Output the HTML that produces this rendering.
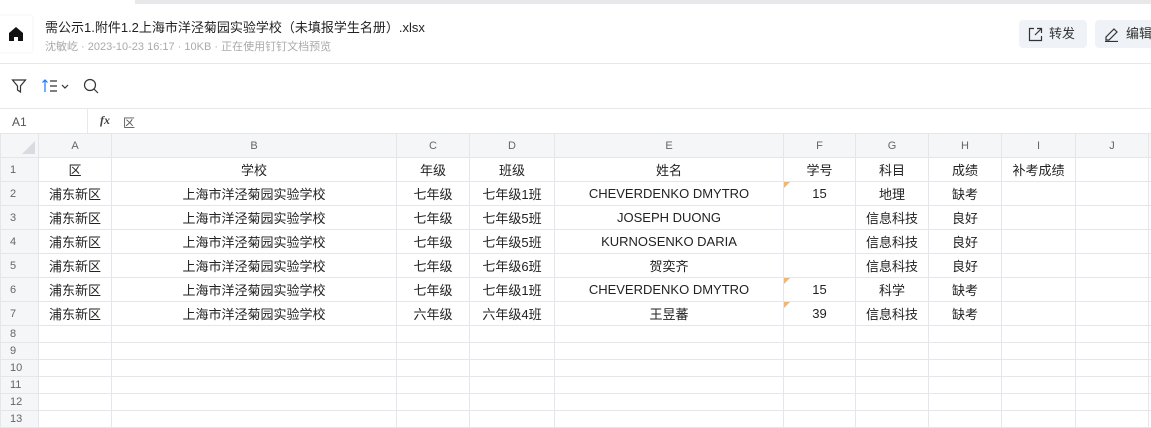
<!DOCTYPE html><html><head><meta charset="utf-8"><style>
*{margin:0;padding:0;box-sizing:border-box}
body{width:1151px;height:427px;overflow:hidden;background:#fff;font-family:"Liberation Sans","Noto Sans CJK SC",sans-serif;color:#222;position:relative}
.abs{position:absolute}
table{border-collapse:collapse;table-layout:fixed;position:absolute;left:0;top:133px;width:1168px}
td{border:1px solid #e3e6ea;font-size:13px;text-align:center;white-space:nowrap;overflow:hidden;padding:0;position:relative;color:#222}
tr.h td{background:#f5f6f8;color:#666;font-size:11px;height:24px}
td.rn{background:#f5f6f8;color:#666;font-size:11px;text-align:left;padding-left:9px}
tr.r td{height:24px}
tr.s td{height:17px}
.tri{position:absolute;left:0;top:0;width:0;height:0;border-top:6px solid #f5b56a;border-right:6px solid transparent}
</style></head><body>
<div class="abs" style="left:135px;top:0;width:1016px;height:4px;background:#e8e8ea"></div>
<div class="abs" style="left:0;top:16px;width:32px;height:36px;background:#fff;box-shadow:0 0 3px #eee"></div>
<svg class="abs" style="left:8px;top:26px" width="16" height="16" viewBox="0 0 16 16"><path d="M8 1 L15 7 V15 H10 V11 H6 V15 H1 V7 Z" fill="#111"/></svg>
<div class="abs" style="left:45px;top:17px;font-size:13px;color:#222">需公示1.附件1.2上海市洋泾菊园实验学校（未填报学生名册）.xlsx</div>
<div class="abs" style="left:45px;top:38px;font-size:11px;color:#aaa">沈敏屹 · 2023-10-23 16:17 · 10KB · 正在使用钉钉文档预览</div>
<div class="abs" style="left:1019px;top:20px;width:68px;height:28px;background:#eff2f6;border-radius:4px;font-size:13px;line-height:28px;padding-left:30px;color:#333">转发</div>
<svg class="abs" style="left:1028px;top:27px" width="15" height="15" viewBox="0 0 15 15" fill="none" stroke="#333" stroke-width="1.2"><path d="M6 1.5H1.5V13.5H13.5V9M9 1.5H13.5V6M13.5 1.5L7 8"/></svg>
<div class="abs" style="left:1095px;top:20px;width:70px;height:28px;background:#eff2f6;border-radius:4px;font-size:13px;line-height:28px;padding-left:31px;color:#333">编辑</div>
<svg class="abs" style="left:1104px;top:27px" width="15" height="15" viewBox="0 0 15 15" fill="none" stroke="#333" stroke-width="1.2"><path d="M10 2L13 5L5 13H2V10Z M1 14.5H14"/></svg>
<div class="abs" style="left:0;top:63px;width:1151px;height:1px;background:#e8e8ea"></div>
<svg class="abs" style="left:11px;top:78px" width="16" height="16" viewBox="0 0 16 16" fill="none" stroke="#333" stroke-width="1.2"><path d="M1.5 2H14.5L9.5 8V14L6.5 12V8Z"/></svg>
<svg class="abs" style="left:41px;top:78px" width="30" height="16" viewBox="0 0 30 16" fill="none" stroke-width="1.2"><path d="M4 14V2M1.5 4.5L4 2L6.5 4.5" stroke="#1677ff"/><path d="M9 3H16M9 8H16M9 13H16" stroke="#333"/><path d="M21 7L24 10L27 7" stroke="#333"/></svg>
<svg class="abs" style="left:83px;top:78px" width="16" height="16" viewBox="0 0 16 16" fill="none" stroke="#333" stroke-width="1.2"><circle cx="7" cy="7" r="5.5"/><path d="M11 11L15 15"/></svg>
<div class="abs" style="left:0;top:108px;width:1151px;height:1px;background:#e8e8ea"></div>
<div class="abs" style="left:12px;top:115px;font-size:12px;color:#555">A1</div>
<div class="abs" style="left:87px;top:109px;width:1px;height:24px;background:#e8e8ea"></div>
<div class="abs" style="left:100px;top:113px;font-size:12px;font-style:italic;font-weight:bold;color:#444;font-family:'Liberation Serif',serif">fx</div>
<div class="abs" style="left:123px;top:114px;font-size:12px;color:#555">区</div>
<table>
<colgroup><col style="width:38px"><col style="width:73px"><col style="width:285px"><col style="width:73px"><col style="width:85px"><col style="width:229px"><col style="width:72px"><col style="width:73px"><col style="width:73px"><col style="width:74px"><col style="width:73px"><col style="width:20px"></colgroup>
<tr class="h"><td><svg width="30" height="18" style="display:block;margin-left:6px"><path d="M28 4V17H15Z" fill="#d8dbe0"/></svg></td><td>A</td><td>B</td><td>C</td><td>D</td><td>E</td><td>F</td><td>G</td><td>H</td><td>I</td><td>J</td><td></td></tr>
<tr class="r"><td class="rn">1</td><td>区</td><td>学校</td><td>年级</td><td>班级</td><td>姓名</td><td>学号</td><td>科目</td><td>成绩</td><td>补考成绩</td><td></td><td></td></tr>
<tr class="r"><td class="rn">2</td><td>浦东新区</td><td>上海市洋泾菊园实验学校</td><td>七年级</td><td>七年级1班</td><td>CHEVERDENKO DMYTRO</td><td><span class="tri"></span>15</td><td>地理</td><td>缺考</td><td></td><td></td><td></td></tr>
<tr class="r"><td class="rn">3</td><td>浦东新区</td><td>上海市洋泾菊园实验学校</td><td>七年级</td><td>七年级5班</td><td>JOSEPH DUONG</td><td></td><td>信息科技</td><td>良好</td><td></td><td></td><td></td></tr>
<tr class="r"><td class="rn">4</td><td>浦东新区</td><td>上海市洋泾菊园实验学校</td><td>七年级</td><td>七年级5班</td><td>KURNOSENKO DARIA</td><td></td><td>信息科技</td><td>良好</td><td></td><td></td><td></td></tr>
<tr class="r"><td class="rn">5</td><td>浦东新区</td><td>上海市洋泾菊园实验学校</td><td>七年级</td><td>七年级6班</td><td>贺奕齐</td><td></td><td>信息科技</td><td>良好</td><td></td><td></td><td></td></tr>
<tr class="r"><td class="rn">6</td><td>浦东新区</td><td>上海市洋泾菊园实验学校</td><td>七年级</td><td>七年级1班</td><td>CHEVERDENKO DMYTRO</td><td><span class="tri"></span>15</td><td>科学</td><td>缺考</td><td></td><td></td><td></td></tr>
<tr class="r"><td class="rn">7</td><td>浦东新区</td><td>上海市洋泾菊园实验学校</td><td>六年级</td><td>六年级4班</td><td>王昱蕃</td><td><span class="tri"></span>39</td><td>信息科技</td><td>缺考</td><td></td><td></td><td></td></tr>
<tr class="s"><td class="rn">8</td><td></td><td></td><td></td><td></td><td></td><td></td><td></td><td></td><td></td><td></td><td></td></tr>
<tr class="s"><td class="rn">9</td><td></td><td></td><td></td><td></td><td></td><td></td><td></td><td></td><td></td><td></td><td></td></tr>
<tr class="s"><td class="rn">10</td><td></td><td></td><td></td><td></td><td></td><td></td><td></td><td></td><td></td><td></td><td></td></tr>
<tr class="s"><td class="rn">11</td><td></td><td></td><td></td><td></td><td></td><td></td><td></td><td></td><td></td><td></td><td></td></tr>
<tr class="s"><td class="rn">12</td><td></td><td></td><td></td><td></td><td></td><td></td><td></td><td></td><td></td><td></td><td></td></tr>
<tr class="s"><td class="rn">13</td><td></td><td></td><td></td><td></td><td></td><td></td><td></td><td></td><td></td><td></td><td></td></tr>
</table>
</body></html>
